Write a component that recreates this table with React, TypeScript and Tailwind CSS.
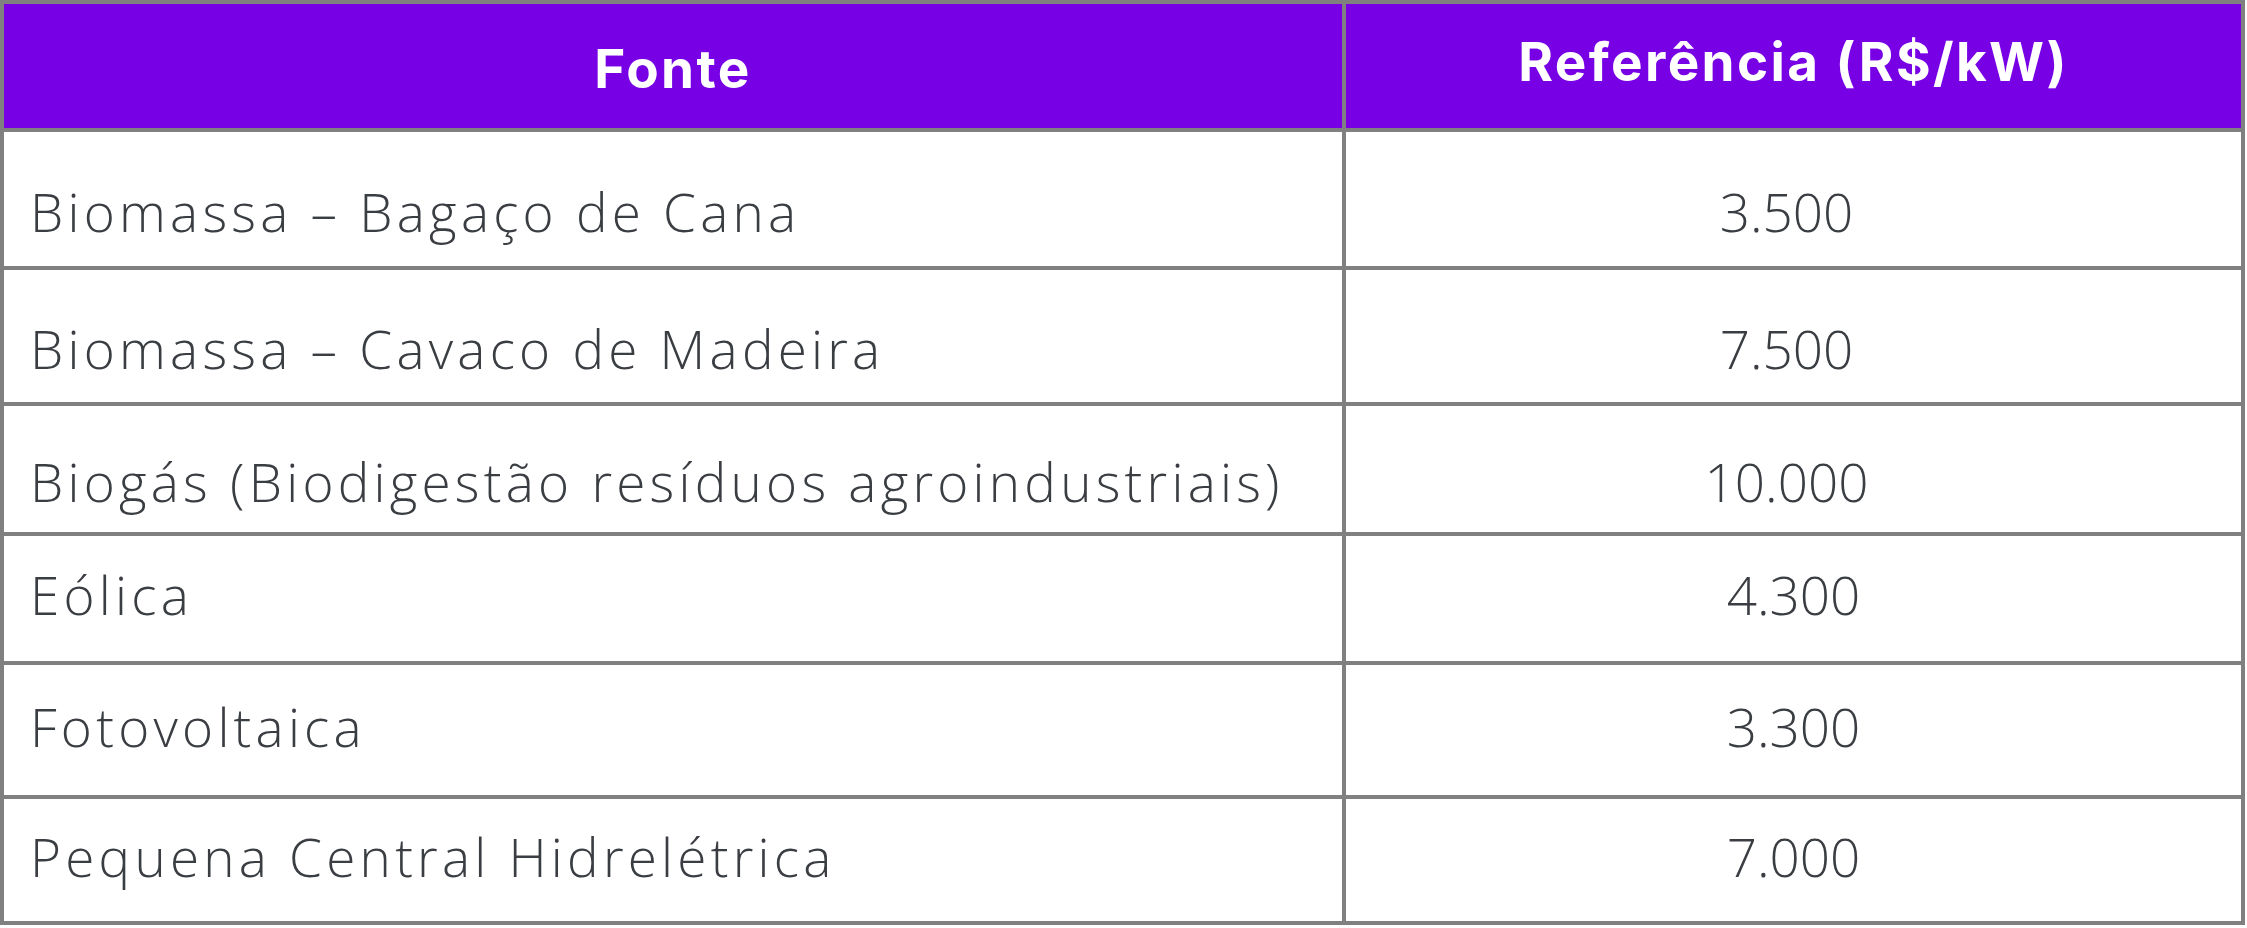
const rows = [
  { fonte: "Biomassa – Bagaço de Cana", valor: "3.500", h: "h-[138px]", low: true },
  { fonte: "Biomassa – Cavaco de Madeira", valor: "7.500", h: "h-[136px]", low: true },
  { fonte: "Biogás (Biodigestão resíduos agroindustriais)", valor: "10.000", h: "h-[130px]", low: true },
  { fonte: "Eólica", valor: "4.300", h: "h-[129px]", low: false },
  { fonte: "Fotovoltaica", valor: "3.300", h: "h-[134px]", low: false },
  { fonte: "Pequena Central Hidrelétrica", valor: "7.000", h: "h-[126px]", low: false },
];

export default function App() {
  return (
    <div className="bg-white w-[2247px] h-[928px]">
      <div className="w-[2245px] border-4 border-[#808080] flex flex-col">
        {/* Header */}
        <div className="flex h-[124px] bg-[#7700e5] text-white font-bold text-[53px] leading-none tracking-[0.045em] [font-family:Inter,'Liberation_Sans',sans-serif]">
          <div className="w-[1338px] flex items-center justify-center pt-[6px]">Fonte</div>
          <div className="flex-1 flex items-center justify-center border-l-4 border-[#808080] pb-[8px]">
            Referência (R$/kW)
          </div>
        </div>

        {rows.map((row) => (
          <div
            key={row.fonte}
            className={`flex border-t-4 border-[#808080] text-[#3a3d42] text-[53px] font-[350] leading-none [font-family:'Open_Sans','Noto_Sans',sans-serif] ${row.h}`}
          >
            <div
              className={`w-[1338px] flex items-center pl-[26px] tracking-[0.08em] ${
                row.low ? "pt-[24px]" : "pb-[8px]"
              }`}
            >
              {row.fonte}
            </div>
            <div
              className={`flex-1 flex items-center justify-center border-l-4 border-[#808080] ${
                row.low ? "pt-[24px] pr-[14px]" : "pb-[8px]"
              }`}
            >
              {row.valor}
            </div>
          </div>
        ))}
      </div>
    </div>
  );
}
